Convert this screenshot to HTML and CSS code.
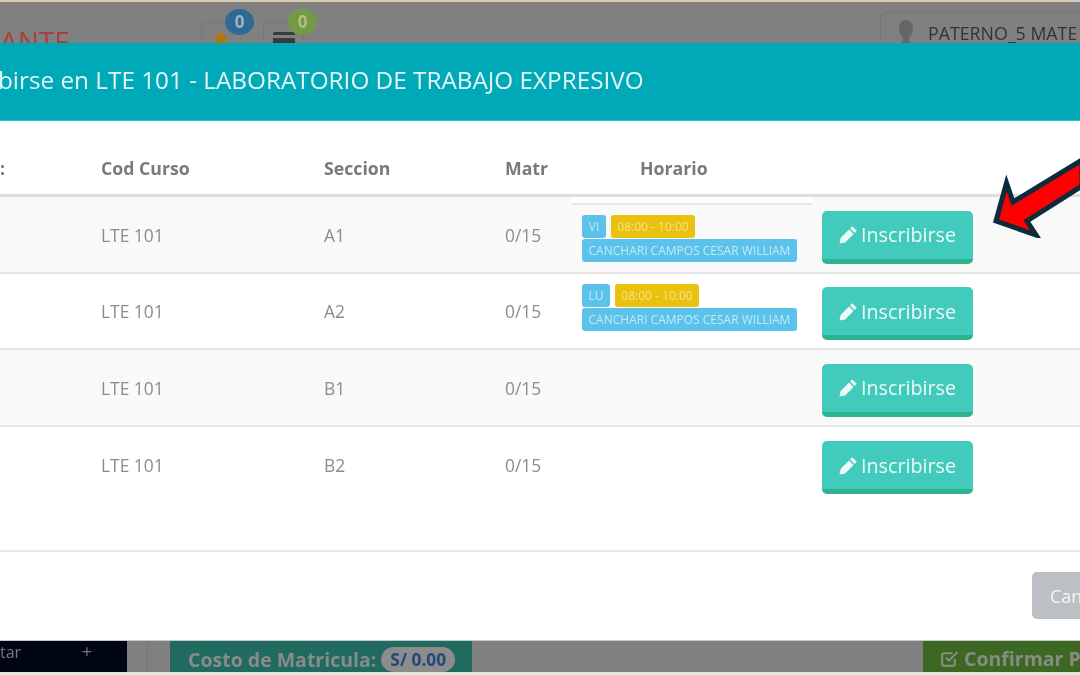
FILE: index.html
```html
<!DOCTYPE html>
<html lang="es">
<head>
  <meta charset="UTF-8" />
  <title>Inscribirse</title>
  <link rel="stylesheet" href="styles.css">
</head>
<body>

<!-- Fondo: barra superior -->
<div class="topbar">
  <div class="brand">ANTE</div>
  <div class="notif notif-bell">
    <svg class="bell" viewBox="0 0 14 20"><path d="M7 0l3 4c2 1 3 4 3 8v8H1v-8c0-4 1-7 3-8z"/></svg>
    <span class="count count-blue">0</span>
  </div>
  <div class="notif notif-card">
    <svg class="card" viewBox="0 0 24 20"><rect x="1" y="0" width="22" height="20" rx="2"/><rect x="0" y="3" width="24" height="3" fill="#808080"/></svg>
    <span class="count count-green">0</span>
  </div>
  <div class="user-box">
    <svg class="user-pic" viewBox="0 0 18 30"><path d="M9 0c4 0 7 3 7 8s-2 8-4 10v3l6 5v4H0v-4l6-5v-3C4 16 2 13 2 8s3-8 7-8z"/></svg>
    <span>PATERNO_5 MATE</span>
  </div>
</div>

<!-- Modal -->
<div class="modal">
  <div class="modal-header">birse en LTE 101 - LABORATORIO DE TRABAJO EXPRESIVO</div>
  <div class="modal-body">
    <table class="sections">
      <thead>
        <tr>
          <th class="col-a">:</th>
          <th class="col-b">Cod Curso</th>
          <th class="col-c">Seccion</th>
          <th class="col-d">Matr</th>
          <th class="col-e"><span class="horario-title">Horario</span></th>
          <th></th>
        </tr>
      </thead>
      <tbody>
        <tr>
          <td></td><td>LTE 101</td><td>A1</td><td>0/15</td>
          <td class="schedule first">
            <div class="nested-top"></div>
            <div class="label-row"><span class="tag tag-blue tag-day">VI</span><span class="tag tag-yellow tag-time">08:00 - 10:00</span></div>
            <div class="tag tag-blue tag-teacher">CANCHARI CAMPOS CESAR WILLIAM</div>
          </td>
          <td><button class="btn-enroll"><svg class="pencil" viewBox="0 0 18 18"><path d="M12.500 1.200l4.300 4.300-2 2-4.300-4.300zM9.500 4.200l4.300 4.300-8 8L0.500 17.500l1-5.300z"/></svg>Inscribirse</button></td>
        </tr>
        <tr>
          <td></td><td>LTE 101</td><td>A2</td><td>0/15</td>
          <td class="schedule">
            <div class="label-row"><span class="tag tag-blue tag-day">LU</span><span class="tag tag-yellow tag-time">08:00 - 10:00</span></div>
            <div class="tag tag-blue tag-teacher">CANCHARI CAMPOS CESAR WILLIAM</div>
          </td>
          <td><button class="btn-enroll"><svg class="pencil" viewBox="0 0 18 18"><path d="M12.500 1.200l4.300 4.300-2 2-4.300-4.300zM9.500 4.200l4.300 4.300-8 8L0.500 17.500l1-5.300z"/></svg>Inscribirse</button></td>
        </tr>
        <tr>
          <td></td><td>LTE 101</td><td>B1</td><td>0/15</td><td></td>
          <td><button class="btn-enroll"><svg class="pencil" viewBox="0 0 18 18"><path d="M12.500 1.200l4.300 4.300-2 2-4.300-4.300zM9.500 4.200l4.300 4.300-8 8L0.500 17.500l1-5.300z"/></svg>Inscribirse</button></td>
        </tr>
        <tr>
          <td></td><td>LTE 101</td><td>B2</td><td>0/15</td><td></td>
          <td><button class="btn-enroll"><svg class="pencil" viewBox="0 0 18 18"><path d="M12.500 1.200l4.300 4.300-2 2-4.300-4.300zM9.500 4.200l4.300 4.300-8 8L0.500 17.500l1-5.300z"/></svg>Inscribirse</button></td>
        </tr>
      </tbody>
    </table>
  </div>
  <div class="modal-footer">
    <button class="btn-cancel">Can</button>
  </div>
</div>

<!-- Fondo: barra inferior -->
<div class="bottombar">
  <div class="dark-box"><span>tar</span><span class="plus">+</span></div>
  <div class="divider"></div>
  <div class="cost-box">Costo de Matricula: <span class="cost-pill">S/ 0.00</span></div>
  <div class="confirm-box">
    <svg class="check" viewBox="0 0 18 18"><path d="M14 9.500V14a2 2 0 0 1-2 2H4a2 2 0 0 1-2-2V6a2 2 0 0 1 2-2h8"/><path d="M5.500 8l3 3L16.500 3"/></svg>
    Confirmar P
  </div>
</div>

<!-- Flecha de la captura -->
<svg class="arrow" viewBox="0 0 90 84"><path d="M6 67L16.500 29 23 48 92 6V32L37 67 46 81z"/></svg>

</body>
</html>
```

FILE: styles.css
```css
* {
  margin: 0; padding: 0; box-sizing: border-box;
}
html, body {
  width: 1080px;
  height: 675px;
  overflow: hidden;
}
html {
  background: #e6e6e6;
}
body {
  font-family: "Open Sans", sans-serif;
  background: #e6e6e6;
  display: flex;
  flex-direction: column;
  position: relative;
  filter: blur(0.4px); /* la captura original esta reescalada */
}

/* barra superior */
.topbar {
  height: 43px;
  flex-shrink: 0;
  background: #808080;
  border-top: 2px solid #d8c8b2;
  display: flex;
  align-items: flex-start;
  overflow: hidden;
}
.brand {
  width: 201px;
  flex-shrink: 0;
  margin-top: 21px;
  font-size: 28px;
  line-height: 36px;
  color: #a8403c;
}
.notif {
  width: 41px;
  height: 40px;
  margin-top: 20px;
  border: 1px solid #767676;
  border-radius: 4px;
  position: relative;
  flex-shrink: 0;
}
.notif-card {
  margin-left: 21px;
}
.bell {
  width: 14px;
  height: 20px;
  fill: #b0770f;
  position: absolute;
  left: 12px;
  top: 8px;
}
.card {
  width: 24px;
  height: 20px;
  fill: #3a3a3a;
  position: absolute;
  left: 8px;
  top: 9px;
}
.count {
  position: absolute;
  top: -14px;
  left: 23px;
  width: 29px;
  height: 26px;
  border-radius: 50%;
  font-size: 17px;
  font-weight: 700;
  line-height: 25px;
  text-align: center;
}
.count-blue {
  background: #2e6a93;
  color: #9db4c6;
}
.count-green {
  left: 24px;
  background: #729a48;
  color: #b5bf7a;
}
.user-box {
  margin-left: auto;
  margin-top: 10px;
  height: 50px;
  width: 200px;
  flex-shrink: 0;
  border: 1px solid #767676;
  border-right: none;
  border-radius: 6px 0 0 6px;
  display: flex;
  align-items: flex-start;
  padding: 7px 0 0 16px;
  font-size: 17.800px;
  line-height: 26px;
  color: #333;
  white-space: nowrap;
}
.user-pic {
  width: 18px;
  height: 30px;
  fill: #666;
  margin-right: 13px;
  flex-shrink: 0;
}

/* modal */
.modal {
  flex: 1;
  background: white;
  display: flex;
  flex-direction: column;
  min-height: 0;
}
.modal-header {
  height: 78px;
  flex-shrink: 0;
  background: #00a9b7;
  border-bottom: 1px solid #2fbdc9;
  color: #e4f6f7;
  font-size: 24.300px;
  line-height: 74px;
  text-indent: -2px;
  white-space: nowrap;
}
.modal-body {
  height: 431px;
  flex-shrink: 0;
  border-bottom: 2px solid #e8e8e8;
}
.sections {
  width: 1080px;
  table-layout: fixed;
  border-collapse: separate;
  border-spacing: 0;
  font-size: 17.400px;
}
.col-a { width: 101px; }
.col-b { width: 223px; }
.col-c { width: 181px; }
.col-d { width: 67px; }
.col-e { width: 240px; }
.sections th {
  height: 76px;
  padding-top: 20px;
  text-align: left;
  font-size: 17.700px;
  font-weight: 700;
  color: #7a7a7a;
  border-bottom: 3px solid #dedede;
}
.horario-title {
  margin-left: 68px;
}
.sections td {
  height: 77px;
  color: #8c8c8c;
  border-bottom: 2px solid #e6e6e6;
}
.sections tbody tr:nth-child(even) td {
  height: 76px;
}
.sections tbody tr:nth-child(odd) td {
  background: #f9f9f9;
}
.sections tbody tr:last-child td {
  border-bottom: none;
}

/* horario */
.sections td.schedule {
  padding-left: 10px;
  position: relative;
  vertical-align: top;
  padding-top: 10px;
}
.sections td.schedule.first {
  padding-top: 18px;
}
.nested-top {
  position: absolute;
  left: 0;
  top: 0;
  width: 240px;
  height: 8px;
  background: white;
  border-bottom: 2px solid #e6e6e6;
}
.label-row {
  display: flex;
  gap: 5px;
  margin-bottom: 1px;
}
.tag {
  height: 23px;
  line-height: 23px;
  border-radius: 3px;
  font-size: 12px;
  text-align: center;
  white-space: nowrap;
}
.tag-blue {
  background: #5bc2ec;
  color: #c3e9f5;
}
.tag-yellow {
  background: #e9c10e;
  color: #f6e38a;
}
.tag-day {
  padding: 0 6.500px;
  min-width: 24px;
}
.tag-time {
  width: 84px;
}
.tag-teacher {
  width: 215px;
}

/* botones */
.btn-enroll {
  width: 151px;
  height: 53px;
  margin: 5px 0 0 10px;
  background: #42cbbd;
  border: none;
  border-bottom: 5px solid #2bb48f;
  border-radius: 5px;
  color: #eefaf8;
  font-family: "Open Sans", sans-serif;
  font-size: 19.700px;
  display: flex;
  align-items: center;
  justify-content: center;
  gap: 3px;
}
.pencil {
  width: 19px;
  height: 19px;
  fill: #eefaf8;
}
.modal-footer {
  flex: 1;
  padding: 20px 0 0 1032px;
}
.btn-cancel {
  width: 48px;
  height: 47px;
  background: #bcc0c4;
  border: none;
  border-radius: 5px 0 0 5px;
  color: #f7f7f7;
  font-family: "Open Sans", sans-serif;
  font-size: 18px;
  text-align: left;
  padding-left: 18px;
}

/* barra inferior */
.bottombar {
  height: 35px;
  flex-shrink: 0;
  background: #808080;
  border-top: 1px solid #c9c9c9;
  border-bottom: 3px solid #e6e6e6;
  display: flex;
  align-items: stretch;
  overflow: hidden;
}
.dark-box {
  width: 127px;
  flex-shrink: 0;
  background: #000514;
  color: #777;
  font-size: 16px;
  display: flex;
  justify-content: space-between;
  padding-right: 35px;
}
.plus {
  font-size: 18px;
  line-height: 20px;
}
.divider {
  width: 1px;
  flex-shrink: 0;
  margin-left: 20px;
  background: #747474;
}
.cost-box {
  width: 302px;
  flex-shrink: 0;
  margin-left: 22px;
  background: #216a60;
  color: #878c8a;
  font-size: 19.500px;
  font-weight: 700;
  line-height: 38px;
  padding-left: 18px;
  white-space: nowrap;
}
.cost-pill {
  display: inline-block;
  background: #8c8c8c;
  color: #1f4a7a;
  font-size: 17.300px;
  line-height: 25px;
  border-radius: 13px;
  padding: 0 9px;
  vertical-align: 1px;
}
.confirm-box {
  width: 157px;
  margin-left: 451px;
  flex-shrink: 0;
  background: #3d6824;
  color: #878c80;
  font-size: 19.500px;
  font-weight: 700;
  line-height: 36px;
  padding: 4px 0 0 17px;
  white-space: nowrap;
  display: flex;
  align-items: center;
  gap: 5px;
}
.check {
  width: 19px;
  height: 19px;
  flex-shrink: 0;
  fill: none;
  stroke: #878c80;
  stroke-width: 2;
}

/* flecha */
.arrow {
  position: absolute;
  left: 990px;
  top: 154px;
  width: 90px;
  height: 84px;
  fill: #fe0000;
  stroke: #0c2b3c;
  stroke-width: 5;
  stroke-miterlimit: 10;
}
```
